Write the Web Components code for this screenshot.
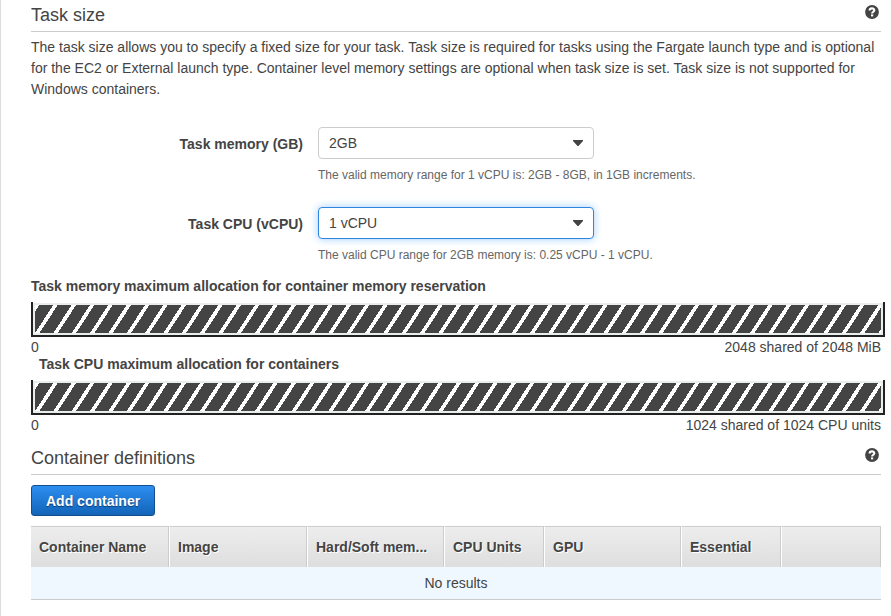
<!DOCTYPE html>
<html lang="en">
<head>
<meta charset="utf-8">
<meta name="viewport" content="width=device-width, initial-scale=1">
<title>Task size</title>
<style>
  html, body { margin: 0; min-height: 100%; background: #fff; }
  html { display: flex; }
  body { flex: 1; min-width: 0; font: 14px/21px "Liberation Sans", Arial, sans-serif; color: #444; display: flex; }
</style>
</head>
<body>
<task-page></task-page>

<script>
function define(name, html, setup) {
  const template = document.createElement('template');
  template.innerHTML = html;
  customElements.define(name, class extends HTMLElement {
    connectedCallback() {
      if (this.shadowRoot) return;
      const root = this.attachShadow({ mode: 'open' });
      root.append(template.content.cloneNode(true));
      if (setup) setup(root, this);
    }
  });
}

define('help-button', `
  <style>
    :host { display: block; }
    button { display: block; width: 14px; height: 14px; padding: 0; border: 0; background: none; color: #444; cursor: pointer; }
    svg { display: block; }
  </style>
  <button type="button" aria-label="Help">
    <svg width="14" height="14" viewBox="0 0 14 14" aria-hidden="true">
      <circle cx="7" cy="7" r="6.9" fill="currentColor"/>
      <path d="M4.6 5.5C4.7 2.7 9.3 2.8 9.3 5.3C9.3 6.8 7.1 6.7 7.1 8.6" fill="none" stroke="#fff" stroke-width="2.1"/>
      <rect x="6" y="9.4" width="2.2" height="2" fill="#fff"/>
    </svg>
  </button>`);

define('section-header', `
  <style>
    :host { display: flex; justify-content: space-between; align-items: flex-start; border-bottom: 1px solid #ccc; padding-bottom: 1px; }
    h2 { margin: 0; font-size: 18px; line-height: 30px; font-weight: 400; }
    help-button { padding: 5px 2px 0 0; }
  </style>
  <h2><slot></slot></h2>
  <help-button></help-button>`);

define('select-field', `
  <style>
    :host { display: grid; grid-template-columns: 32% 1fr; column-gap: 15px; row-gap: 7px; }
    label { font-weight: 700; text-align: right; line-height: 34px; height: 32px; }
    .box { display: grid; width: 276px; max-width: 100%; align-items: center; }
    select, svg { grid-area: 1 / 1; }
    select { appearance: none; box-sizing: border-box; width: 100%; height: 32px; margin: 0; padding: 0 30px 0 10px; font: inherit; color: inherit; background: #fff; border: 1px solid #ccc; border-radius: 4px; outline: none; }
    svg { justify-self: end; margin-right: 11px; pointer-events: none; }
    :host([active]) select { border-color: #2e86e0; box-shadow: 0 0 8px #a0cdfa; }
    p { grid-column: 2; margin: 0; font-size: 12px; line-height: 18px; color: #666; }
  </style>
  <label for="s"></label>
  <div class="box">
    <select id="s" aria-describedby="hint"></select>
    <svg width="10" height="6" viewBox="0 0 10 6" aria-hidden="true"><path d="M0 0H10V1L5.5 6H4.5L0 1Z" fill="#444"/></svg>
  </div>
  <p id="hint"><slot></slot></p>`,
  (root, host) => {
    root.querySelector('label').textContent = host.getAttribute('label');
    root.querySelector('select').add(new Option(host.getAttribute('value')));
  });

define('allocation-meter', `
  <style>
    :host { display: block; }
    h3 { margin: 0 0 9px; font-size: 14px; line-height: 14px; font-weight: 700; }
    :host([indent]) h3 { padding-left: 8px; }
    .frame { margin-right: -4px; border: solid #222; border-width: 0 2px 2px; padding-top: 1px; }
    .track { background: #e9eded; padding: 2px; }
    svg { display: block; width: 100%; height: 28px; }
    .scale { display: flex; justify-content: space-between; line-height: 20px; }
  </style>
  <h3></h3>
  <div class="frame"><div class="track">
    <svg aria-hidden="true">
      <defs>
        <linearGradient id="stripes" gradientUnits="userSpaceOnUse" x1="0" y1="0" x2="12.832" y2="8.402" spreadMethod="repeat">
          <stop offset="0" stop-color="#fff"/>
          <stop offset=".24" stop-color="#fff"/>
          <stop offset=".24" stop-color="#444"/>
          <stop offset="1" stop-color="#444"/>
        </linearGradient>
      </defs>
      <rect width="100%" height="100%" fill="url(#stripes)"/>
    </svg>
  </div></div>
  <div class="scale"><span>0</span><span><slot></slot></span></div>`,
  (root, host) => { root.querySelector('h3').textContent = host.getAttribute('label'); });

define('primary-button', `
  <style>
    :host { display: block; }
    button { display: block; height: 31px; padding: 2px 14px 0; font: inherit; font-weight: 700; color: #fff; text-shadow: 0 1px 1px #0a3a70; border: 1px solid #124d8c; border-radius: 3px; background: linear-gradient(#2d8ef0, #1264b8); cursor: pointer; }
  </style>
  <button type="button"><slot></slot></button>`);

define('container-table', `
  <style>
    :host { display: block; }
    table { width: 100%; table-layout: fixed; border-collapse: separate; border-spacing: 0; }
    th, td { box-sizing: border-box; padding: 0 8px; }
    th { height: 41px; text-align: left; white-space: nowrap; text-shadow: 1px 1px 0 #fff; background: linear-gradient(#ededed, #dedede); border-top: 1px solid #ccc; border-right: 1px solid #ccc; border-left: 1px solid #fff; }
    th:first-child { border-left: 0; }
    .wide { width: 138px; }
    .narrow { width: 100px; }
    td { height: 33px; text-align: center; background: #f0f8ff; border-bottom: 1px solid #ccc; }
  </style>
  <table>
    <thead><tr>
      <th scope="col" class="wide">Container Name</th>
      <th scope="col" class="wide">Image</th>
      <th scope="col">Hard/Soft mem...</th>
      <th scope="col" class="narrow">CPU Units</th>
      <th scope="col">GPU</th>
      <th scope="col" class="narrow">Essential</th>
      <th scope="col" class="narrow" aria-label="Actions"></th>
    </tr></thead>
    <tbody><tr><td colspan="7">No results</td></tr></tbody>
  </table>`);

define('task-page', `
  <style>
    :host { display: block; flex: 1; min-width: 0; box-sizing: border-box; min-height: 100vh; border-left: 1px solid #ddd; padding: 0 10px 16px 30px; }
    .intro { margin: 5px 0 27px; }
    .fields { display: grid; gap: 23px; margin-bottom: 15px; }
    .containers { margin-top: 8px; }
    primary-button { margin: 10px 0; }
  </style>
  <section>
    <section-header>Task size</section-header>
    <p class="intro">The task size allows you to specify a fixed size for your task. Task size is required for tasks using the Fargate launch type and is optional for the EC2 or External launch type. Container level memory settings are optional when task size is set. Task size is not supported for Windows containers.</p>
    <div class="fields">
      <select-field label="Task memory (GB)" value="2GB">The valid memory range for 1 vCPU is: 2GB - 8GB, in 1GB increments.</select-field>
      <select-field label="Task CPU (vCPU)" value="1 vCPU" active>The valid CPU range for 2GB memory is: 0.25 vCPU - 1 vCPU.</select-field>
    </div>
    <allocation-meter label="Task memory maximum allocation for container memory reservation">2048 shared of 2048 MiB</allocation-meter>
    <allocation-meter label="Task CPU maximum allocation for containers" indent>1024 shared of 1024 CPU units</allocation-meter>
  </section>
  <section class="containers">
    <section-header>Container definitions</section-header>
    <primary-button>Add container</primary-button>
    <container-table></container-table>
  </section>`);
</script>
</body>
</html>
